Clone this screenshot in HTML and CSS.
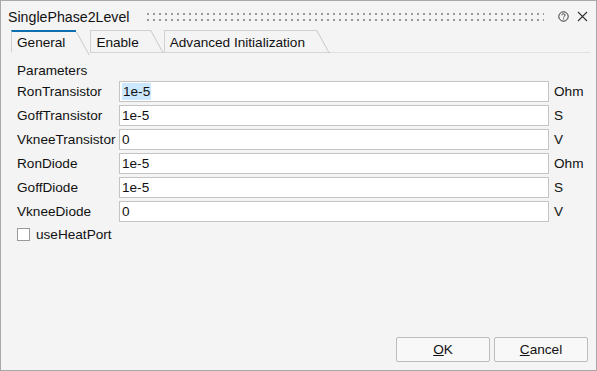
FILE: index.html
```html
<!DOCTYPE html>
<html lang="en">
<head>
    <meta charset="UTF-8">
    <title>SinglePhase2Level</title>
    <link rel="stylesheet" href="styles.css">
</head>
<body>
    <div class="dialog">
        <div class="titlebar">
            <span class="title">SinglePhase2Level</span>
            <span class="grip"></span>
            <svg class="help" width="11" height="11" viewBox="0 0 11 11">
                <circle cx="5.5" cy="5.5" r="4.7" fill="none" stroke="#333" stroke-width="1"/>
                <path d="M3.9 4.3 C3.9 3.2 4.6 2.8 5.5 2.8 C6.4 2.8 7.1 3.3 7.1 4.1 C7.1 5.1 5.6 5.2 5.6 6.4" fill="none" stroke="#333" stroke-width="1"/>
                <rect x="5.1" y="7.4" width="1" height="1" fill="#333"/>
            </svg>
            <svg class="close" width="11" height="11" viewBox="0 0 11 11">
                <path d="M1 1 L10 10 M10 1 L1 10" stroke="#333" stroke-width="1.1"/>
            </svg>
        </div>
        <div class="tabs">
            <div class="tab active">General</div>
            <div class="tab">Enable</div>
            <div class="tab">Advanced Initialization</div>
            <div class="tab-rest"></div>
        </div>
        <div class="panel">
            <div class="group-title">Parameters</div>
            <div class="params">
                <label>RonTransistor</label>
                <div class="field"><span class="selected">1e-5</span></div>
                <span class="unit">Ohm</span>

                <label>GoffTransistor</label>
                <div class="field">1e-5</div>
                <span class="unit">S</span>

                <label>VkneeTransistor</label>
                <div class="field">0</div>
                <span class="unit">V</span>

                <label>RonDiode</label>
                <div class="field">1e-5</div>
                <span class="unit">Ohm</span>

                <label>GoffDiode</label>
                <div class="field">1e-5</div>
                <span class="unit">S</span>

                <label>VkneeDiode</label>
                <div class="field">0</div>
                <span class="unit">V</span>
            </div>
            <div class="check-row">
                <span class="checkbox"></span>
                <span>useHeatPort</span>
            </div>
        </div>
        <div class="footer">
            <button class="btn"><u>O</u>K</button>
            <button class="btn"><u>C</u>ancel</button>
        </div>
    </div>
</body>
</html>
```

FILE: styles.css
```css
body {
    margin: 0;
    padding: 0;
    background: #f4f4f4;
    font-family: "Liberation Sans", Arial, sans-serif;
    font-size: 13.6px;
    color: #111;
}

.dialog {
    width: 597px;
    height: 371px;
    box-sizing: border-box;
    border: 1px solid #a8a8a8;
    background: #f4f4f4;
    display: flex;
    flex-direction: column;
}

.titlebar {
    height: 29px;
    display: flex;
    align-items: center;
    padding: 2px 8px 0 7px;
    box-sizing: border-box;
    gap: 8px;
}

.title {
    font-size: 14.2px;
    color: #111;
}

.grip {
    flex: 1;
    height: 12px;
    margin: 0 6px 0 8px;
    background-image: radial-gradient(circle, #999 0.9px, transparent 1.2px);
    background-size: 6px 6px;
}

.help,
.close {
    display: block;
}

.tabs {
    height: 23px;
    display: flex;
    align-items: stretch;
    padding-left: 10px;
}

.tab {
    position: relative;
    padding: 4px 11px 0 5px;
    margin-right: 14px;
    border-top: 1px solid #d0d0d0;
    border-left: 1px solid #d0d0d0;
    border-bottom: 1px solid #d6d6d6;
    box-sizing: border-box;
    color: #111;
    white-space: nowrap;
}

.tab::after {
    content: "";
    position: absolute;
    top: -1px;
    right: -1px;
    height: 23px;
    width: 0;
    border-left: 1px solid #c8c8c8;
    transform: skewX(29deg);
    transform-origin: top left;
}

.tab::before {
    content: "";
    position: absolute;
    left: 100%;
    bottom: -1px;
    width: 15px;
    border-bottom: 1px solid #d6d6d6;
}

.tab.active {
    border-top: 2px solid #0e6fae;
    border-bottom-color: transparent;
    padding-top: 3px;
}

.tab.active::after {
    top: 0;
}

.tab.active::before {
    display: none;
}

.tab-rest {
    flex: 1;
    margin-right: 6px;
    border-bottom: 1px solid #e2e2e2;
    box-sizing: border-box;
}

.panel {
    flex: 1;
    padding: 9px 0 0 16px;
}

.group-title {
    height: 17px;
    line-height: 17px;
    margin-bottom: 2px;
}

.params {
    display: grid;
    grid-template-columns: 102px 430px 40px;
    grid-auto-rows: 21px;
    row-gap: 3px;
    align-items: center;
}

.params label {
    white-space: nowrap;
}

.field {
    height: 21px;
    box-sizing: border-box;
    border: 1px solid #c4c4c4;
    background: #fff;
    padding: 0 2px;
    line-height: 19px;
}

.selected {
    background: #cce8ff;
    display: inline-block;
    line-height: 17px;
    padding: 0 1px;
}

.unit {
    padding-left: 5px;
}

.check-row {
    display: flex;
    align-items: center;
    gap: 6px;
    margin-top: 5px;
}

.checkbox {
    width: 11px;
    height: 11px;
    border: 1px solid #9a9a9a;
    background: #fff;
}

.footer {
    display: flex;
    justify-content: flex-end;
    gap: 4px;
    padding: 0 8px 8px 0;
}

.btn {
    width: 94px;
    height: 25px;
    border: 1px solid #bdbdbd;
    border-radius: 2px;
    background: #f8f8f8;
    font-family: "Liberation Sans", Arial, sans-serif;
    font-size: 13.6px;
    color: #111;
    padding: 0;
}
```
